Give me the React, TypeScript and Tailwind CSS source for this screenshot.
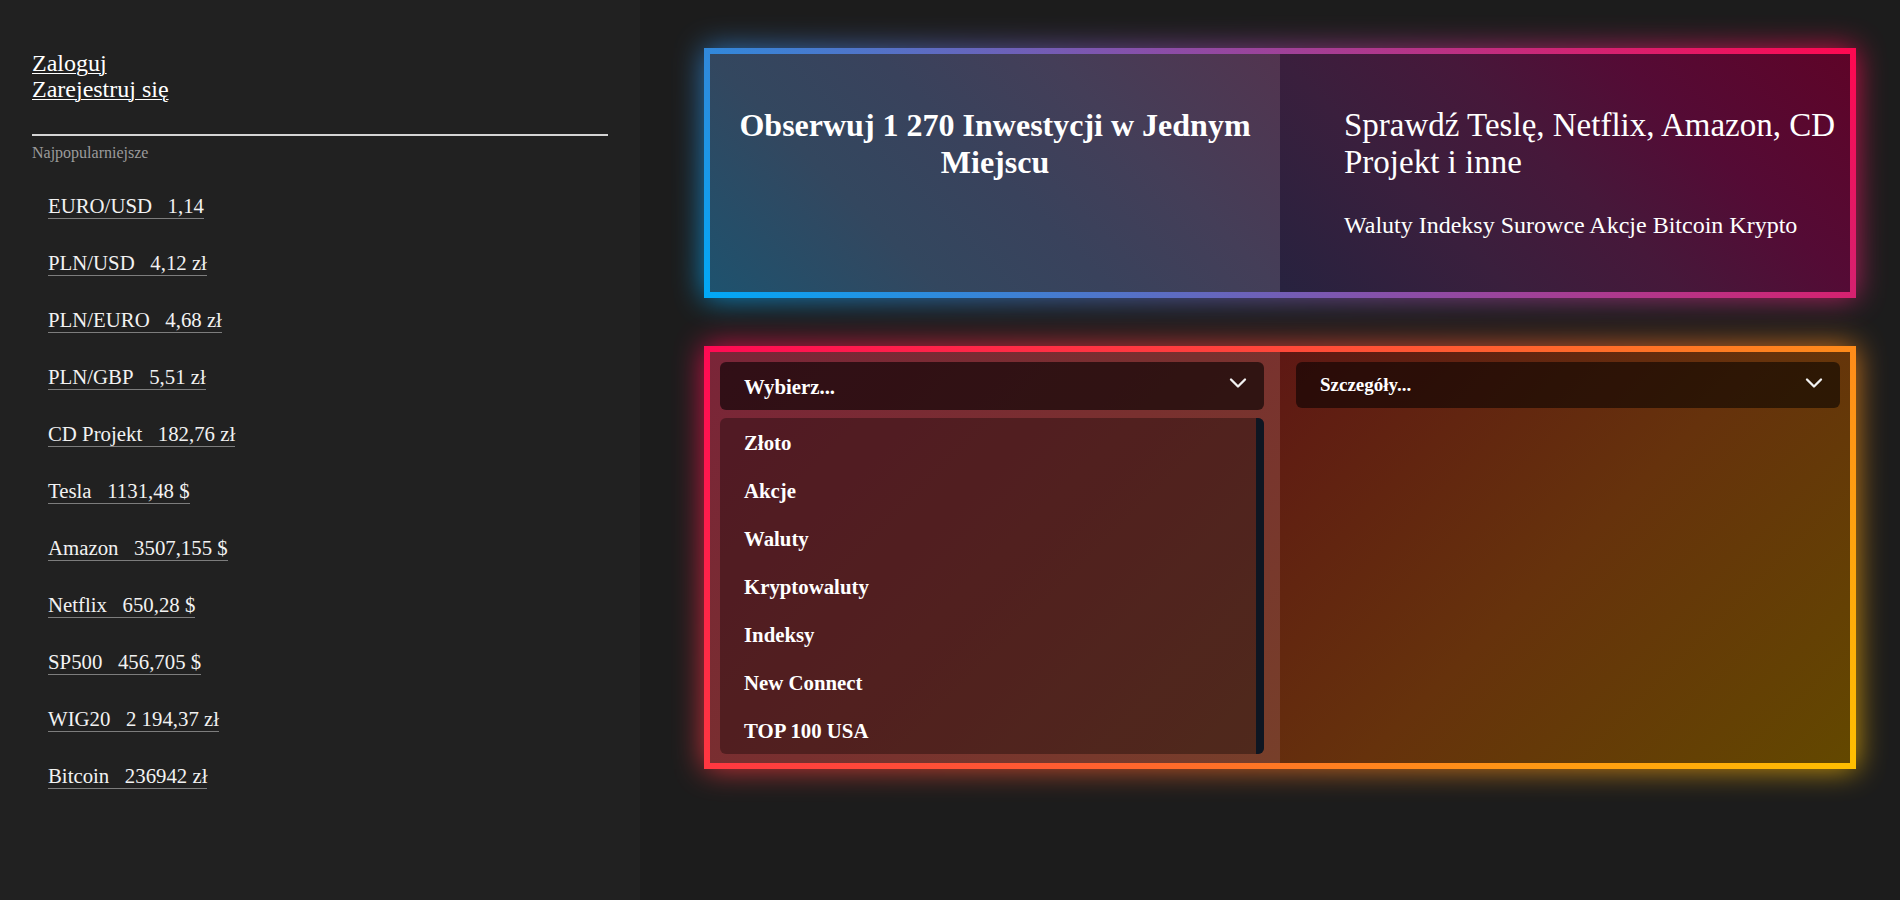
import { ChevronDown } from "lucide-react";

const items: [string, string][] = [
  ["EURO/USD", "1,14"],
  ["PLN/USD", "4,12 zł"],
  ["PLN/EURO", "4,68 zł"],
  ["PLN/GBP", "5,51 zł"],
  ["CD Projekt", "182,76 zł"],
  ["Tesla", "1131,48 $"],
  ["Amazon", "3507,155 $"],
  ["Netflix", "650,28 $"],
  ["SP500", "456,705 $"],
  ["WIG20", "2 194,37 zł"],
  ["Bitcoin", "236942 zł"],
];

const options = ["Złoto", "Akcje", "Waluty", "Kryptowaluty", "Indeksy", "New Connect", "TOP 100 USA"];

export default function App() {
  return (
    <div className="flex h-[900px] w-full overflow-hidden bg-[#1c1c1c] font-['Liberation_Serif','Times_New_Roman',serif] text-white">
      <aside className="w-[640px] shrink-0 bg-[#212121] px-8 pt-[50px]">
        <div className="flex flex-col items-start text-[24px] leading-[26px]">
          <a className="underline decoration-1 underline-offset-2">Zaloguj</a>
          <a className="underline decoration-1 underline-offset-2">Zarejestruj się</a>
        </div>
        <div className="mt-8 h-[2px] bg-[#d4d4d4]" />
        <div className="mt-2 text-[16px] leading-[18px] text-[#9b9b9b]">Najpopularniejsze</div>
        <ul className="mt-[32px] flex flex-col items-start gap-[32px] pl-4">
          {items.map(([n, v]) => (
            <li
              key={n}
              className="whitespace-pre border-b border-[#7d7d7d] text-[20.8px] leading-[24px] text-[#f2f2f2]"
            >
              {n}
              {"\u00a0\u00a0\u00a0"}
              {v}
            </li>
          ))}
        </ul>
      </aside>

      <main className="flex flex-col gap-12 pl-16 pt-12">
        <div className="relative h-[250px] w-[1152px]">
          <div className="absolute inset-0 bg-[linear-gradient(45deg,#00a9f7,#8a4ea8_50%,#ff0850)] opacity-80 blur-[15px]" />
          <div className="relative flex h-full bg-[linear-gradient(45deg,#00a9f7,#8a4ea8_50%,#ff0850)] p-[6px]">
            <div className="w-[570px] shrink-0 bg-[linear-gradient(45deg,#1e526e,#33475f_29%,#39425c_50%,#443e58_71%,#52344f)] px-4 pt-[53px] text-center">
              <h1 className="text-[32px] font-bold leading-[37px]">Obserwuj 1 270 Inwestycji w Jednym Miejscu</h1>
            </div>
            <div className="w-[570px] shrink-0 bg-[linear-gradient(45deg,#27223f,#3a1f3d_29%,#46183a_50%,#540b35_71%,#5e0428)] pl-16 pt-[53px]">
              <p className="text-[33px] leading-[37px]">Sprawdź Teslę, Netflix, Amazon, CD Projekt i inne</p>
              <p className="mt-[30px] text-[24px] leading-[28px]">Waluty Indeksy Surowce Akcje Bitcoin Krypto</p>
            </div>
          </div>
        </div>

        <div className="relative h-[423px] w-[1152px]">
          <div className="absolute inset-0 bg-[linear-gradient(135deg,#ff0a54,#ff5e30_50%,#ffc000)] opacity-80 blur-[15px]" />
          <div className="relative flex h-full bg-[linear-gradient(135deg,#ff0a54,#ff5e30_50%,#ffc000)] p-[6px]">
            <div className="flex w-[570px] shrink-0 flex-col gap-2 bg-[linear-gradient(135deg,#7a2538,#79302f_50%,#773f2a)] pl-[10px] pr-4 pt-[10px]">
              <div className="flex h-12 items-center justify-between rounded-md bg-black/60 pl-6 pr-3">
                <span className="text-[20.8px] font-bold leading-[23px]">Wybierz...</span>
                <ChevronDown size={28} strokeWidth={2} className="mb-[6px] text-[#f2f2f2]" />
              </div>
              <div className="flex overflow-hidden rounded-md bg-black/[0.33]">
                <ul className="flex-1">
                  {options.map((o) => (
                    <li key={o} className="flex h-12 items-center px-6 text-[20.8px] font-bold leading-[23px]">
                      {o}
                    </li>
                  ))}
                </ul>
                <div className="w-2 bg-[#0e1622]" />
              </div>
            </div>
            <div className="w-[570px] shrink-0 bg-[linear-gradient(135deg,#5e1814,#66320c_50%,#634800)] pl-4 pr-[10px] pt-[10px]">
              <div className="flex h-[46px] items-center justify-between rounded-md bg-black/55 pl-6 pr-3">
                <span className="text-[19px] font-bold leading-[22px]">Szczegóły...</span>
                <ChevronDown size={28} strokeWidth={2} className="mb-[4px] text-[#f2f2f2]" />
              </div>
            </div>
          </div>
        </div>
      </main>
    </div>
  );
}
